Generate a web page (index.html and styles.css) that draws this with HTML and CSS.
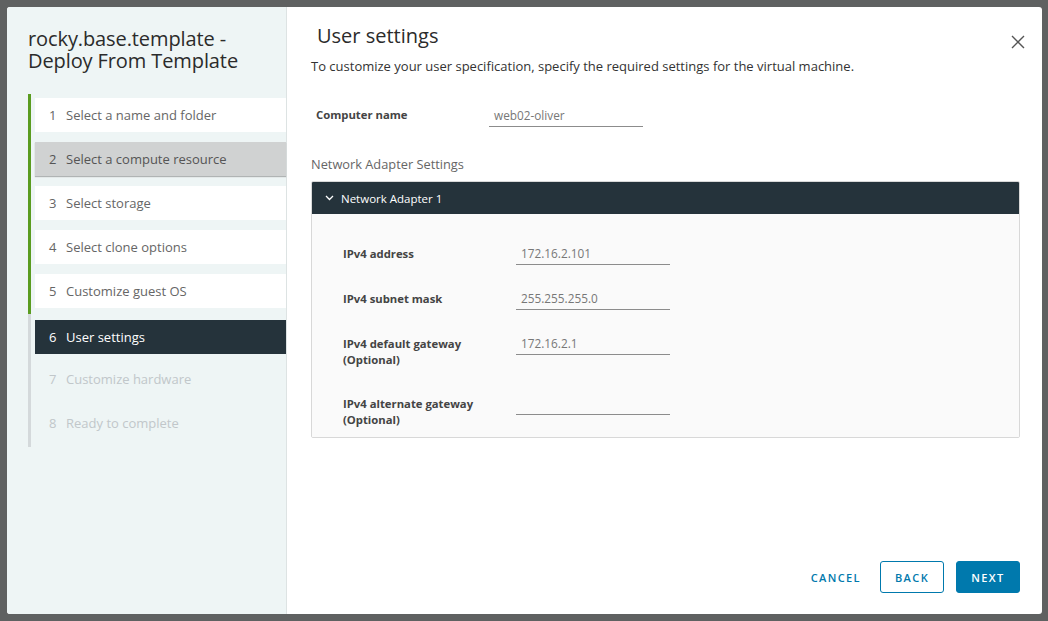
FILE: index.html
```html
<!DOCTYPE html>
<html>
<head>
<meta charset="utf-8">
<link rel="stylesheet" href="styles.css">
</head>
<body>
<div class="backdrop">
  <div class="modal">
    <aside class="side">
      <h1 class="side-title"><span class="tl">rocky.base.template -</span><span class="tl">Deploy From Template</span></h1>
      <div class="steps">
        <div class="track"><div class="track-done"></div><div class="track-rest"></div></div>
        <ol class="step-list">
          <li class="step done"><span class="num">1</span>Select a name and folder</li>
          <li class="step hover"><span class="num">2</span>Select a compute resource</li>
          <li class="step done"><span class="num">3</span>Select storage</li>
          <li class="step done"><span class="num">4</span>Select clone options</li>
          <li class="step done"><span class="num">5</span>Customize guest OS</li>
          <li class="step active"><span class="num">6</span>User settings</li>
          <li class="step todo"><span class="num">7</span>Customize hardware</li>
          <li class="step todo"><span class="num">8</span>Ready to complete</li>
        </ol>
      </div>
    </aside>
    <main class="content">
      <div class="head">
        <h2 class="title">User settings</h2>
        <svg class="close" width="14" height="14" viewBox="0 0 14 14"><path d="M1 1L13 13M13 1L1 13" stroke="#555" stroke-width="1.4" fill="none"/></svg>
      </div>
      <p class="desc">To customize your user specification, specify the required settings for the virtual machine.</p>
      <div class="field top-field">
        <label class="lbl">Computer name</label>
        <div class="input">web02-oliver</div>
      </div>
      <div class="section-label">Network Adapter Settings</div>
      <div class="panel">
        <div class="panel-head">
          <svg class="chev" width="9" height="6" viewBox="0 0 9 6"><path d="M1 1L4.5 4.5L8 1" stroke="#fff" stroke-width="1.3" fill="none"/></svg>
          <span>Network Adapter 1</span>
        </div>
        <div class="panel-body">
          <div class="row"><label class="lbl">IPv4 address</label><div class="input">172.16.2.101</div></div>
          <div class="row"><label class="lbl">IPv4 subnet mask</label><div class="input">255.255.255.0</div></div>
          <div class="row"><label class="lbl">IPv4 default gateway<br>(Optional)</label><div class="input">172.16.2.1</div></div>
          <div class="row"><label class="lbl">IPv4 alternate gateway<br>(Optional)</label><div class="input"></div></div>
        </div>
      </div>
      <div class="footer">
        <button class="btn link">CANCEL</button>
        <button class="btn outline">BACK</button>
        <button class="btn primary">NEXT</button>
      </div>
    </main>
  </div>
</div>
</body>
</html>
```
FILE: styles.css
```css
* { box-sizing: border-box; }
html, body { margin: 0; padding: 0; }
body {
  width: 1048px; height: 621px; overflow: hidden;
  font-family: "Open Sans", "Noto Sans", sans-serif;
  background: #606262;
}
.backdrop {
  width: 1048px; height: 621px;
  padding: 7px;
  background: #5f6161;
}
.modal {
  width: 1035px; height: 607px;
  display: flex;
  background: #fff;
  border-radius: 3px;
  overflow: hidden;
}
.side {
  width: 280px;
  flex: none;
  background: #eef5f5;
  border-right: 1px solid #dde3e3;
  padding: 21px 0 0 21px;
}
.side-title {
  margin: 0;
  font-weight: 400;
  font-size: 20px;
  color: #2b2b2b;
  letter-spacing: -0.1px;
  display: flex; flex-direction: column;
}
.tl { display: block; height: 21px; line-height: 21px; }
.tl + .tl { margin-top: 1px; }
.steps {
  display: flex;
  margin-top: 23px;
}
.track { width: 3px; display: flex; flex-direction: column; flex: none; }
.track-done { height: 220px; background: #5a9c20; }
.track-rest { height: 133px; background: #d4d9db; }
.step-list {
  list-style: none; margin: 0; padding: 4px 0 0 4px;
  flex: 1;
  display: flex; flex-direction: column; gap: 10px;
}
.step {
  height: 34px;
  display: flex; align-items: center;
  padding-left: 14px;
  font-size: 13px;
  color: #666;
}
.num { width: 17px; }
.step.done { background: #fff; }
.step.hover { background: #d0d2d2; box-shadow: 0 1px 1px #b0b4b4; color: #555; }
.step.active { background: #25333b; color: #fff; margin-top: 2px; margin-bottom: -2px; }
.step.todo { color: #c1c7ca; }

.content {
  flex: 1;
  padding: 15px 22px 0 24px;
  display: flex; flex-direction: column;
}
.head { display: flex; justify-content: space-between; align-items: center; padding-left: 6px; }
.title {
  margin: 0; font-weight: 400; font-size: 20px; line-height: 28px; color: #2b2b2b;
}
.close { margin-top: 12px; margin-right: -5px; }
.desc { margin: 7px 0 0 0; font-size: 13px; color: #333; line-height: 18px; }
.field { display: flex; align-items: flex-end; }
.top-field { margin-top: 31px; padding-left: 5px; }
.top-field .lbl { width: 173px; padding-bottom: 4px; }
.lbl { font-size: 11.3px; font-weight: 700; color: #444; line-height: 16px; }
.input {
  width: 154px; height: 21px;
  border-bottom: 1px solid #8c8c8c;
  font-size: 11.8px; color: #777; padding: 0 0 0 5px;
  line-height: 18px;
}
.section-label { margin-top: 28px; font-size: 12.8px; color: #666; }
.panel {
  margin-top: 8px;
  border: 1px solid #d8d8d8;
  border-radius: 2px;
  overflow: hidden;
}
.panel-head {
  height: 32px; background: #25333b; color: #fff;
  display: flex; align-items: center;
  padding-left: 13px; font-size: 11.5px;
}
.chev { margin-right: 7px; }
.panel-body {
  background: #fafafa;
  padding: 30px 0 9px 31px;
  display: flex; flex-direction: column; gap: 13px;
}
.row { display: flex; align-items: flex-start; min-height: 32px; }
.row .lbl { width: 173px; padding-top: 2px; }
.row:nth-child(3) { min-height: 38px; }
.row:nth-child(4) .input { margin-top: 9px; }
.row:nth-child(4) .lbl { padding-top: 11px; }
.footer {
  margin-top: auto;
  padding-bottom: 21px;
  display: flex; justify-content: flex-end; gap: 12px;
}
.btn {
  font-family: inherit;
  height: 32px; min-width: 64px;
  font-size: 11px; letter-spacing: 1.4px; font-weight: 600;
  border-radius: 3px; padding: 0 12px; cursor: pointer;
}
.btn.link { background: none; border: 1px solid transparent; color: #0079ad; margin-right: -6px; }
.btn.outline { background: #fff; border: 1px solid #0079ad; color: #0079ad; }
.btn.primary { background: #0079ad; border: 1px solid #0079ad; color: #fff; }
```
